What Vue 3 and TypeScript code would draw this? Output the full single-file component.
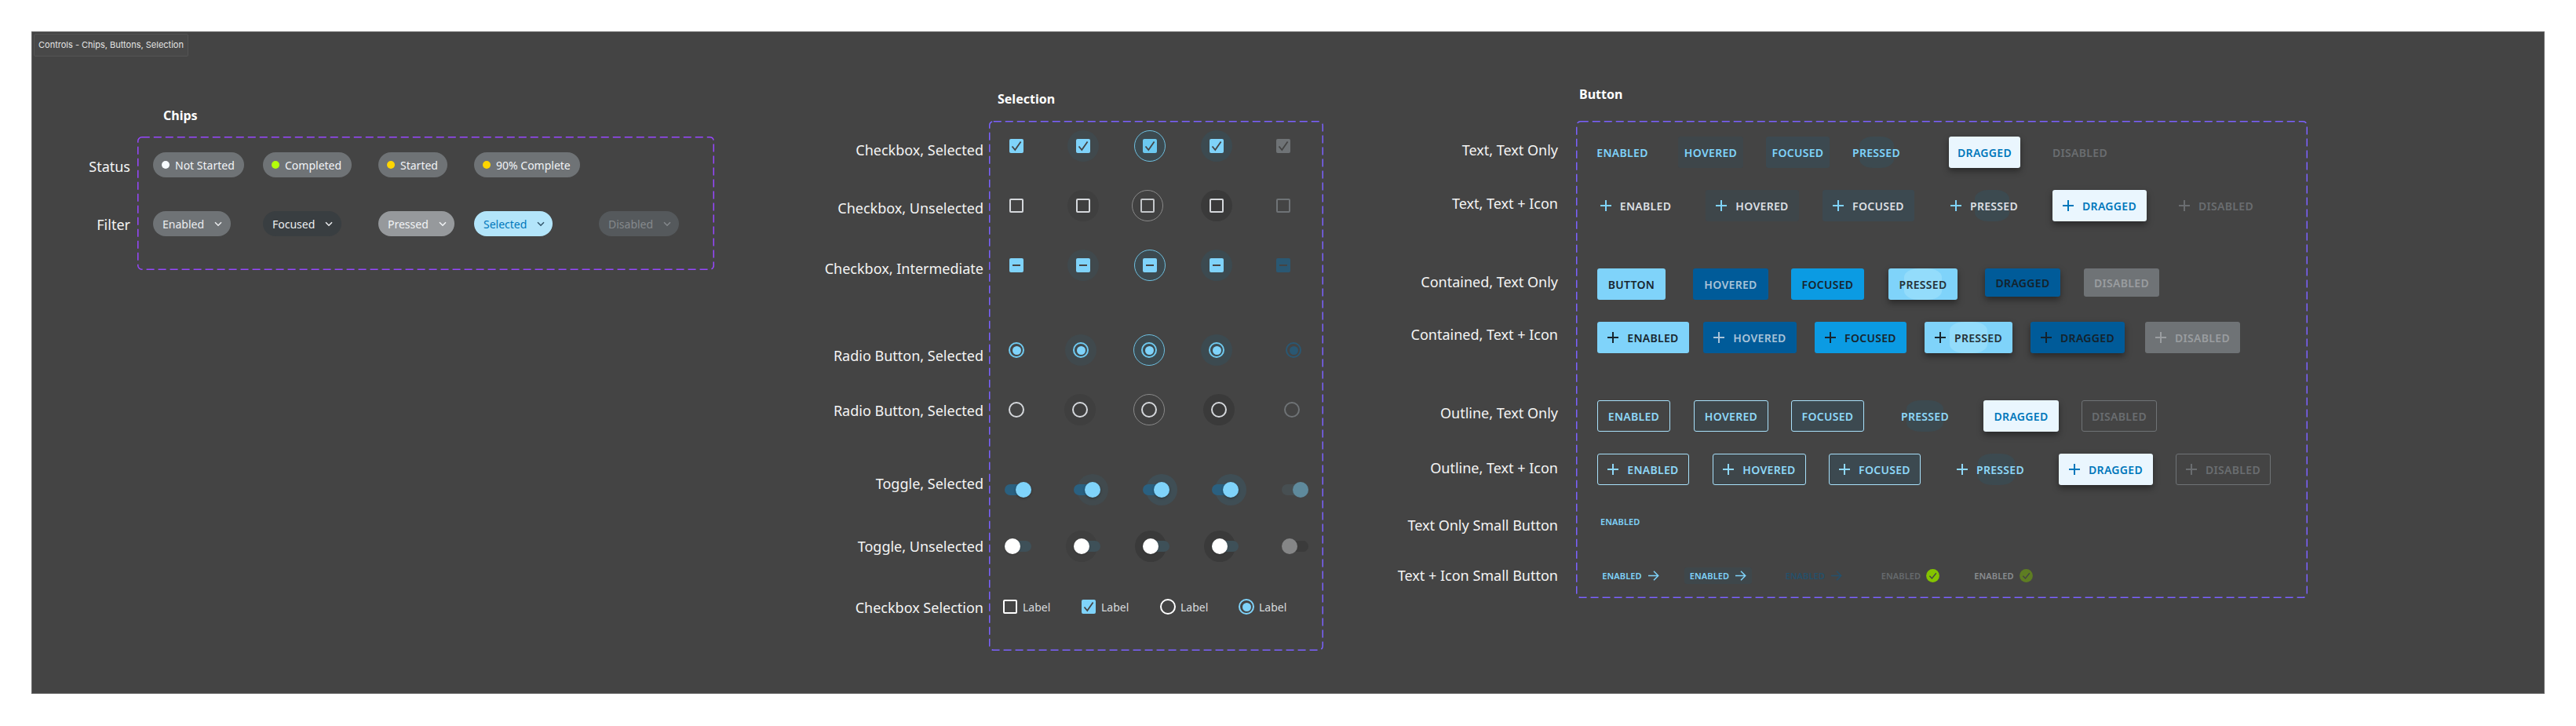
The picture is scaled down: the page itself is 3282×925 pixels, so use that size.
<script setup lang="ts">
interface Chip { label: string; x: number; w: number; kind: string; dot?: string }
interface Btn { label: string; x: number; w: number; kind: string; h?: number; blob?: [number, number] }
interface BtnRow { y: number; group: string; icon: boolean; items: Btn[] }
interface Cell { x: number; w: number; state: string }
interface SideLabel { text: string; y: number; h: number }

// turns page positions into the margin each item needs after the previous one
function spaced<T>(items: T[], at: (i: T) => number, size: (i: T) => number, origin: number) {
  let cur = origin;
  return items.map((item) => {
    const gap = at(item) - cur;
    cur = at(item) + size(item);
    return { ...item, gap };
  });
}
const acrossFrom = <T extends { x: number; w: number }>(items: T[], origin: number) =>
  spaced(items, (i) => i.x, (i) => i.w, origin);
const downFrom = <T extends { y: number; h: number }>(items: T[], origin: number) =>
  spaced(items, (i) => i.y, (i) => i.h, origin);

const labelsFor = (list: [string, number][]) =>
  list.map(([text, cy]): SideLabel => ({ text, y: cy - 12, h: 24 }));

const chipRows = downFrom(
  [
    {
      y: 194, h: 32,
      items: acrossFrom<Chip>([
        { label: 'Not Started', x: 195, w: 116, kind: 'status', dot: '#f7fbff' },
        { label: 'Completed', x: 335, w: 113, kind: 'status', dot: '#b3ff0a' },
        { label: 'Started', x: 482, w: 88, kind: 'status', dot: '#ffd500' },
        { label: '90% Complete', x: 604, w: 135, kind: 'status', dot: '#ffd500' },
      ], 175),
    },
    {
      y: 269, h: 32,
      items: acrossFrom<Chip>([
        { label: 'Enabled', x: 195, w: 99, kind: 'enabled' },
        { label: 'Focused', x: 335, w: 100, kind: 'focused' },
        { label: 'Pressed', x: 482, w: 97, kind: 'pressed' },
        { label: 'Selected', x: 604, w: 100, kind: 'selected' },
        { label: 'Disabled', x: 763, w: 102, kind: 'disabled' },
      ], 175),
    },
  ],
  174,
);

const chipLabels = downFrom(labelsFor([['Status', 212], ['Filter', 286]]), 174);

const sel = (xs: number[], w = 40) => {
  const states = ['plain', 'hov', 'foc', 'prs', 'dis'];
  return acrossFrom(xs.map((x, i): Cell => ({ x: x - w / 2, w, state: states[i] })), 1260);
};

const cols = [1295, 1380, 1465, 1550, 1635];
const selRows = downFrom(
  ([
    { y: 166, kind: 'check', xs: cols },
    { y: 242, kind: 'box', xs: [1295, 1380, 1462, 1550, 1635] },
    { y: 318, kind: 'mixed', xs: cols },
    { y: 426, kind: 'radio', xs: [1295, 1377, 1464, 1550, 1648] },
    { y: 502, kind: 'ring', xs: [1295, 1376, 1464, 1553, 1646] },
    { y: 604, kind: 'on', xs: [1297, 1385, 1473, 1561, 1650] },
    { y: 676, kind: 'off', xs: [1297, 1385, 1473, 1561, 1650] },
  ]).map((r) => ({ y: r.y, h: 40, kind: r.kind, items: sel(r.xs) })),
  154,
);

const selLabels = downFrom(
  labelsFor([
    ['Checkbox, Selected', 191],
    ['Checkbox, Unselected', 265],
    ['Checkbox, Intermediate', 342],
    ['Radio Button, Selected', 453],
    ['Radio Button, Selected', 523],
    ['Toggle, Selected', 616],
    ['Toggle, Unselected', 696],
    ['Checkbox Selection', 774],
  ]),
  154,
);

const btnRows = downFrom(
  ([
    { y: 174, group: 'text', icon: false, items: [
      { label: 'ENABLED', x: 2035, w: 64, kind: 'plain' },
      { label: 'HOVERED', x: 2138, w: 83, kind: 'hov' },
      { label: 'FOCUSED', x: 2250, w: 81, kind: 'foc' },
      { label: 'PRESSED', x: 2361, w: 59, kind: 'prs', blob: [8, 44] },
      { label: 'DRAGGED', x: 2483, w: 91, kind: 'drg' },
      { label: 'DISABLED', x: 2616, w: 68, kind: 'dis' },
    ] },
    { y: 242, group: 'text', icon: true, items: [
      { label: 'ENABLED', x: 2039, w: 90, kind: 'plain' },
      { label: 'HOVERED', x: 2173, w: 119, kind: 'hov' },
      { label: 'FOCUSED', x: 2322, w: 117, kind: 'foc' },
      { label: 'PRESSED', x: 2486, w: 84, kind: 'prs', blob: [30, 44] },
      { label: 'DRAGGED', x: 2615, w: 120, kind: 'drg' },
      { label: 'DISABLED', x: 2777, w: 93, kind: 'dis' },
    ] },
    { y: 342, group: 'contained', icon: false, items: [
      { label: 'BUTTON', x: 2035, w: 87, kind: 'plain' },
      { label: 'HOVERED', x: 2157, w: 96, kind: 'hov' },
      { label: 'FOCUSED', x: 2282, w: 93, kind: 'foc' },
      { label: 'PRESSED', x: 2406, w: 88, kind: 'prs', blob: [20, 48] },
      { label: 'DRAGGED', x: 2529, w: 96, kind: 'drg', h: 36 },
      { label: 'DISABLED', x: 2655, w: 96, kind: 'dis', h: 36 },
    ] },
    { y: 410, group: 'contained', icon: true, items: [
      { label: 'ENABLED', x: 2035, w: 117, kind: 'plain' },
      { label: 'HOVERED', x: 2170, w: 119, kind: 'hov' },
      { label: 'FOCUSED', x: 2312, w: 117, kind: 'foc' },
      { label: 'PRESSED', x: 2452, w: 112, kind: 'prs', blob: [32, 48] },
      { label: 'DRAGGED', x: 2587, w: 120, kind: 'drg' },
      { label: 'DISABLED', x: 2733, w: 121, kind: 'dis' },
    ] },
    { y: 510, group: 'outline', icon: false, items: [
      { label: 'ENABLED', x: 2035, w: 93, kind: 'plain' },
      { label: 'HOVERED', x: 2158, w: 95, kind: 'hov' },
      { label: 'FOCUSED', x: 2282, w: 93, kind: 'foc' },
      { label: 'PRESSED', x: 2423, w: 59, kind: 'prs', blob: [6, 47] },
      { label: 'DRAGGED', x: 2527, w: 96, kind: 'drg' },
      { label: 'DISABLED', x: 2652, w: 96, kind: 'dis' },
    ] },
    { y: 578, group: 'outline', icon: true, items: [
      { label: 'ENABLED', x: 2035, w: 117, kind: 'plain' },
      { label: 'HOVERED', x: 2182, w: 119, kind: 'hov' },
      { label: 'FOCUSED', x: 2330, w: 117, kind: 'foc' },
      { label: 'PRESSED', x: 2494, w: 84, kind: 'prs', blob: [26, 47] },
      { label: 'DRAGGED', x: 2623, w: 120, kind: 'drg' },
      { label: 'DISABLED', x: 2772, w: 121, kind: 'dis' },
    ] },
  ] as BtnRow[]).map((r) => ({ ...r, h: 40, items: acrossFrom(r.items, 2008) })),
  154,
);

const smallRow = acrossFrom(
  [
    { x: 2041, w: 73, kind: 'plain', icon: 'arrow' },
    { x: 2146, w: 86, kind: 'hov', icon: 'arrow' },
    { x: 2274, w: 74, kind: 'dim', icon: 'arrow' },
    { x: 2396, w: 76, kind: 'dis', icon: 'done' },
    { x: 2515, w: 75, kind: 'dis2', icon: 'done' },
  ],
  2008,
);

const btnLabels = downFrom(
  labelsFor([
    ['Text, Text Only', 191],
    ['Text, Text + Icon', 259],
    ['Contained, Text Only', 359],
    ['Contained, Text + Icon', 426],
    ['Outline, Text Only', 526],
    ['Outline, Text + Icon', 596],
    ['Text Only Small Button', 669],
    ['Text + Icon Small Button', 733],
  ]),
  154,
);
</script>

<template>
  <div class="page">
    <div class="frame">
      <div class="tag">Controls - Chips, Buttons, Selection</div>
      <div class="sections">
        <section class="sec sec-chips">
          <h2 class="title">Chips</h2>
          <div class="body">
            <div class="side">
              <div v-for="l in chipLabels" :key="l.text" class="side-label" :style="{ marginTop: l.gap + 'px' }">{{ l.text }}</div>
            </div>
            <div class="box">
              <svg class="dash"><rect x=".75" y=".75" rx="5" /></svg>
              <div v-for="row in chipRows" :key="row.y" class="line chip-line" :style="{ marginTop: row.gap + 'px' }">
                <div
                  v-for="c in row.items"
                  :key="c.label"
                  class="chip"
                  :class="'chip-' + c.kind"
                  :style="{ marginLeft: c.gap + 'px', width: c.w + 'px' }"
                >
                  <i v-if="c.dot" class="chip-dot" :style="{ background: c.dot }"></i>
                  <span>{{ c.label }}</span>
                  <svg v-if="!c.dot" class="chevron" width="10" height="7" viewBox="0 0 10 7"><path d="M1 1.2l4 4 4-4" /></svg>
                </div>
              </div>
            </div>
          </div>
        </section>

        <section class="sec sec-sel">
          <h2 class="title">Selection</h2>
          <div class="body">
            <div class="side">
              <div v-for="(l, i) in selLabels" :key="i" class="side-label" :style="{ marginTop: l.gap + 'px' }">{{ l.text }}</div>
            </div>
            <div class="box">
              <svg class="dash"><rect x=".75" y=".75" rx="5" /></svg>
              <div v-for="row in selRows" :key="row.kind" class="line sel-line" :class="'line-' + row.kind" :style="{ marginTop: row.gap + 'px' }">
                <div
                  v-for="c in row.items"
                  :key="c.x"
                  class="cell"
                  :class="'cell-' + c.state"
                  :style="{ marginLeft: c.gap + 'px' }"
                >
                  <span v-if="row.kind === 'on' || row.kind === 'off'" class="toggle"><i class="halo"></i><i class="knob"></i></span>
                  <span v-else class="ctl">
                    <svg v-if="row.kind === 'check'" width="18" height="18" viewBox="0 0 18 18"><path class="tick" d="M3.5 9.5l3.8 4.5L14.6 3.6" /></svg>
                    <i v-if="row.kind === 'mixed'" class="minus"></i>
                    <i v-if="row.kind === 'radio'" class="dot"></i>
                  </span>
                </div>
              </div>
              <div class="label-row">
                <div class="labelled"><span class="mini mini-box"></span>Label</div>
                <div class="labelled">
                  <span class="mini mini-check"><svg width="18" height="18" viewBox="0 0 18 18"><path class="tick" d="M3.5 9.5l3.8 4.5L14.6 3.6" /></svg></span>Label
                </div>
                <div class="labelled"><span class="mini mini-ring"></span>Label</div>
                <div class="labelled"><span class="mini mini-radio"><i></i></span>Label</div>
              </div>
            </div>
          </div>
        </section>

        <section class="sec sec-btn">
          <h2 class="title">Button</h2>
          <div class="body">
            <div class="side">
              <div v-for="l in btnLabels" :key="l.text" class="side-label" :style="{ marginTop: l.gap + 'px' }">{{ l.text }}</div>
            </div>
            <div class="box">
              <svg class="dash"><rect x=".75" y=".75" rx="5" /></svg>
              <div
                v-for="row in btnRows"
                :key="row.y"
                class="line btn-line"
                :class="'group-' + row.group"
                :style="{ marginTop: row.gap + 'px' }"
              >
                <div
                  v-for="b in row.items"
                  :key="b.x"
                  class="btn"
                  :class="['btn-' + b.kind, { 'has-icon': row.icon }]"
                  :style="{ marginLeft: b.gap + 'px', width: b.w + 'px', height: (b.h || 40) + 'px' }"
                >
                  <i v-if="b.blob" class="blob" :style="{ left: b.blob[0] + 'px', width: b.blob[1] + 'px' }"></i>
                  <svg v-if="row.icon" class="plus" width="14" height="14" viewBox="0 0 14 14"><path d="M7 0v14M0 7h14" /></svg>
                  <span class="btn-text">{{ b.label }}</span>
                </div>
              </div>
              <div class="small-one">ENABLED</div>
              <div class="small-row">
                <div
                  v-for="s in smallRow"
                  :key="s.x"
                  class="small"
                  :class="'small-' + s.kind"
                  :style="{ marginLeft: s.gap + 'px', width: s.w + 'px' }"
                >
                  <span>ENABLED</span>
                  <svg v-if="s.icon === 'arrow'" class="arrow" width="14" height="13" viewBox="0 0 14 13"><path d="M0 6.5h13M7 .8l5.7 5.7L7 12.2" /></svg>
                  <svg v-else class="done" width="17" height="17" viewBox="0 0 17 17"><circle class="done-bg" cx="8.5" cy="8.5" r="8.4" /><path class="done-tick" d="M4.4 8.8l3 3.2 5.4-6.8" /></svg>
                </div>
              </div>
            </div>
          </div>
        </section>
      </div>
    </div>
  </div>
</template>

<style>
html, body {
  margin: 0;
  background: #fff;
}
</style>

<style scoped>
.page {
  width: 3282px;
  height: 925px;
  padding: 40px;
  box-sizing: border-box;
  overflow: hidden;
  font-family: "Noto Sans", "Open Sans", sans-serif;
}

.frame {
  width: 3202px;
  height: 844px;
  background: #444444;
  box-shadow: inset 0 0 0 1px #666;
  isolation: isolate;
  overflow: hidden;
}

.tag {
  box-sizing: border-box;
  width: 197px;
  height: 29px;
  margin: 3px 0 0 3px;
  border: 1px solid #545454;
  border-radius: 2px;
  background: #484848;
  color: #e4e4e4;
  font-family: Inter, "Noto Sans", sans-serif;
  font-size: 11px;
  line-height: 27px;
  text-align: center;
  white-space: nowrap;
}

.sections {
  display: flex;
  align-items: flex-start;
}

.sec { flex: none; }
.sec-chips { margin: 63px 0 0 20px; }
.sec-sel { margin: 42px 0 0 130px; }
.sec-btn { margin: 36px 0 0 74px; }

.title {
  margin: 0 0 15px;
  color: #fff;
  font-size: 16px;
  font-weight: 700;
  line-height: 24px;
  white-space: nowrap;
}
.sec-chips .title { padding-left: 148px; }
.sec-sel .title { margin-bottom: 16px; padding-left: 231px; }
.sec-btn .title { margin-bottom: 22px; padding-left: 252px; }

.body {
  display: flex;
  align-items: flex-start;
}

.side {
  flex: none;
  text-align: right;
  color: #f4f4f4;
  font-size: 18px;
  line-height: 24px;
  white-space: nowrap;
}
.sec-chips .side { width: 106px; margin-right: 9px; }
.sec-sel .side { width: 213px; margin-right: 7px; }
.sec-btn .side { width: 225px; margin-right: 23px; }

.side-label { height: 24px; }

.box {
  position: relative;
  flex: none;
}
.sec-chips .box { width: 735px; height: 170px; }
.sec-sel .box { width: 426px; height: 675px; }
.sec-btn .box { width: 932px; height: 608px; }

.dash {
  position: absolute;
  inset: 0;
  width: 100%;
  height: 100%;
  pointer-events: none;
}
.dash rect {
  width: calc(100% - 1.5px);
  height: calc(100% - 1.5px);
  fill: none;
  stroke: #7b61ff;
  stroke-width: 1.5;
  stroke-dasharray: 10 5;
}
.sec-chips .dash rect { stroke: #9747ff; }

.line { display: flex; align-items: flex-start; }

.chip-line { height: 32px; }

.chip {
  flex: none;
  box-sizing: border-box;
  height: 32px;
  display: flex;
  align-items: center;
  padding: 0 0 0 12px;
  border-radius: 16px;
  font-size: 14px;
  white-space: nowrap;
}
.chip-dot {
  flex: none;
  width: 10px;
  height: 10px;
  margin-right: 7px;
  border-radius: 50%;
}
.chevron {
  margin-left: 13px;
  fill: none;
  stroke: currentColor;
  stroke-width: 1.5;
}
.chip-status { background: #6f7376; color: #f2f4f6; padding-left: 11px; }
.chip-enabled { background: #6f7376; color: #eceef0; }
.chip-focused { background: #393e41; color: #eceef0; }
.chip-pressed { background: #96999c; color: #f2f4f6; }
.chip-selected { background: #b3e5fa; color: #0077bb; }
.chip-selected .chevron { color: #33566b; }
.chip-disabled { background: #55595c; color: #85898c; }

.sel-line { height: 40px; }

.cell {
  flex: none;
  box-sizing: border-box;
  width: 40px;
  height: 40px;
  display: flex;
  align-items: center;
  justify-content: center;
  border-radius: 50%;
}

.ctl {
  box-sizing: border-box;
  display: flex;
  align-items: center;
  justify-content: center;
  width: 18px;
  height: 18px;
  border-radius: 2px;
}
.tick {
  fill: none;
  stroke: #444;
  stroke-width: 1.8;
}
.minus {
  display: block;
  width: 10px;
  height: 2px;
  background: #444;
}

.line-check .ctl, .line-mixed .ctl { background: #7fd3fa; }
.line-check .cell-foc .ctl { background: #6bc8ef; }
.line-check .cell-dis .ctl { background: #6f7376; }
.line-mixed .cell-dis .ctl { background: #2a5873; }

.line-box .ctl { border: 2px solid #d5d8dc; }
.line-box .cell-dis .ctl { border-color: #6f7376; }
.line-box .cell-foc .ctl { border-color: #c4c7ca; }

.line-check .cell-hov, .line-mixed .cell-hov, .line-radio .cell-hov { background: #40494d; }
.line-check .cell-foc, .line-mixed .cell-foc, .line-radio .cell-foc { background: #3c4a50; border: 1px solid #6fc0e0; }
.line-check .cell-prs, .line-mixed .cell-prs, .line-radio .cell-prs { background: #3c4a50; }

.line-box .cell-hov, .line-ring .cell-hov { background: #3f3f3f; }
.line-box .cell-foc, .line-ring .cell-foc { background: #414141; border: 1px solid #8a8a8a; }
.line-box .cell-prs, .line-ring .cell-prs { background: #3a3a3a; }

.line-radio .ctl, .line-ring .ctl {
  width: 20px;
  height: 20px;
  border-radius: 50%;
  border: 2px solid #6fc9ef;
}
.line-ring .ctl { border-color: #d5d8dc; }
.line-ring .cell-dis .ctl { border-color: #6f7376; }
.line-radio .cell-dis .ctl { border-color: #2a5873; }
.dot {
  display: block;
  width: 11px;
  height: 11px;
  border-radius: 50%;
  background: #7fd3fa;
}
.line-radio .cell-dis .dot { background: #2a5873; }

.toggle {
  position: relative;
  display: block;
  width: 34px;
  height: 14px;
  border-radius: 7px;
  background: #2a6080;
}
.knob {
  position: absolute;
  top: -3px;
  right: 0;
  width: 20px;
  height: 20px;
  border-radius: 50%;
  background: #7fd3fa;
  box-shadow: 0 1px 3px rgba(0, 0, 0, 0.35);
}
.halo {
  position: absolute;
  z-index: -1;
  top: -13px;
  right: -10px;
  width: 40px;
  height: 40px;
  border-radius: 50%;
}
.line-on .cell-hov .halo { background: #414a4e; }
.line-on .cell-foc .halo, .line-on .cell-prs .halo { background: #3f4e55; }
.line-on .cell-dis .toggle { background: #474f52; }
.line-on .cell-dis .knob { background: #5f8a9c; box-shadow: none; }

.line-off .toggle { background: #3e5058; }
.line-off .knob { left: 0; right: auto; background: #fff; box-shadow: 0 1px 2px rgba(0, 0, 0, 0.2); }
.line-off .halo { left: -10px; right: auto; }
.line-off .cell-hov .halo { background: #3f3f3f; }
.line-off .cell-foc .halo, .line-off .cell-prs .halo { background: #3a3a3a; }
.line-off .cell-dis .toggle { background: #3b3b3b; }
.line-off .cell-dis .knob { background: #858687; box-shadow: none; }

.label-row {
  display: flex;
  margin: 47px 0 0 18px;
}
.labelled {
  flex: none;
  width: 100px;
  height: 20px;
  display: flex;
  align-items: center;
  gap: 7px;
  color: #d8dbde;
  font-size: 14px;
}
.mini {
  flex: none;
  box-sizing: border-box;
  width: 18px;
  height: 18px;
  display: flex;
  align-items: center;
  justify-content: center;
}
.mini-box { border: 2px solid #fff; border-radius: 2px; }
.mini-check { background: #7fd3fa; border-radius: 2px; }
.mini-ring, .mini-radio { width: 20px; height: 20px; margin-right: -1px; border-radius: 50%; border: 2px solid #fff; }
.mini-radio { border-color: #7fd3fa; }
.mini-radio i { display: block; width: 11px; height: 11px; border-radius: 50%; background: #7fd3fa; }

.btn-line { height: 40px; }

.btn {
  flex: none;
  box-sizing: border-box;
  position: relative;
  display: flex;
  align-items: center;
  justify-content: center;
  border-radius: 3px;
  font-size: 14px;
  font-weight: 600;
  letter-spacing: 0.3px;
  white-space: nowrap;
  color: #7fd3fa;
}
.btn-text { position: relative; }
.plus {
  position: relative;
  flex: none;
  margin-right: 11px;
  fill: none;
  stroke: currentColor;
  stroke-width: 2;
}
.blob {
  position: absolute;
  top: 0;
  bottom: 0;
  border-radius: 40% / 28%;
  background: #3c4a50;
}

.group-text .has-icon { color: #dcdfe2; }
.group-text .has-icon .plus { color: #7fd3fa; }
.group-text .btn-hov, .group-outline .btn-hov { background: #3e464a; }
.group-text .btn-foc, .group-outline .btn-foc { background: #3c4950; }
.btn-drg {
  box-shadow: 0 4px 8px rgba(0, 0, 0, 0.4);
}
.group-text .btn-drg, .group-outline .btn-drg { background: #eaf6fe; color: #0077bb; }
.group-text .btn-drg .plus { color: #0077bb; }
.group-text .btn-dis, .group-outline .btn-dis { color: #6a6d70; }
.group-text .btn-dis .plus { color: #6a6d70; }

.group-contained .btn { background: #7fd3fa; color: #18252e; }
.group-contained .btn-hov { background: #005b99; color: #a9c3d8; }
.group-contained .btn-foc { background: #0b9be3; }
.group-contained .btn-prs { background: #7fd3fa; box-shadow: 0 4px 8px rgba(0, 0, 0, 0.4); }
.group-contained .blob { background: #93dcfb; }
.group-contained .btn-prs .btn-text { color: #263238; }
.group-contained .btn-drg { background: #005b99; color: #14222c; }
.group-contained .btn-dis { background: #6f7376; color: #9a9da0; }

.group-outline .btn { color: #8ed8f8; }
.group-outline .btn-plain, .group-outline .btn-hov, .group-outline .btn-foc { border: 1px solid #a8e0fa; }
.group-outline .btn-drg { color: #0077bb; }
.group-outline .btn-dis { border: 1px solid #6f7376; color: #6a6d70; }

.small-one {
  margin: 39px 0 0 31px;
  height: 16px;
  line-height: 16px;
  color: #7fd3fa;
  font-size: 11px;
  font-weight: 600;
  letter-spacing: 0.1px;
}

.small-row {
  display: flex;
  margin-top: 50px;
  height: 21px;
}
.small {
  flex: none;
  display: flex;
  align-items: center;
  justify-content: center;
  gap: 8px;
  height: 21px;
  color: #7fd3fa;
  font-size: 11px;
  font-weight: 600;
  letter-spacing: 0.1px;
}
.arrow, .done { flex: none; }
.arrow {
  fill: none;
  stroke: currentColor;
  stroke-width: 1.5;
}
.small-hov { background: #3e474b; border-radius: 3px; }
.small-dim { color: #24506b; }
.small-dis { color: #666a6d; gap: 7px; }
.small-dis2 { color: #8a8d90; gap: 7px; }
.done-bg { fill: #84c400; }
.small-dis2 .done-bg { fill: #5e7d22; }
.done-tick { fill: none; stroke: #444; stroke-width: 1.4; }
</style>
